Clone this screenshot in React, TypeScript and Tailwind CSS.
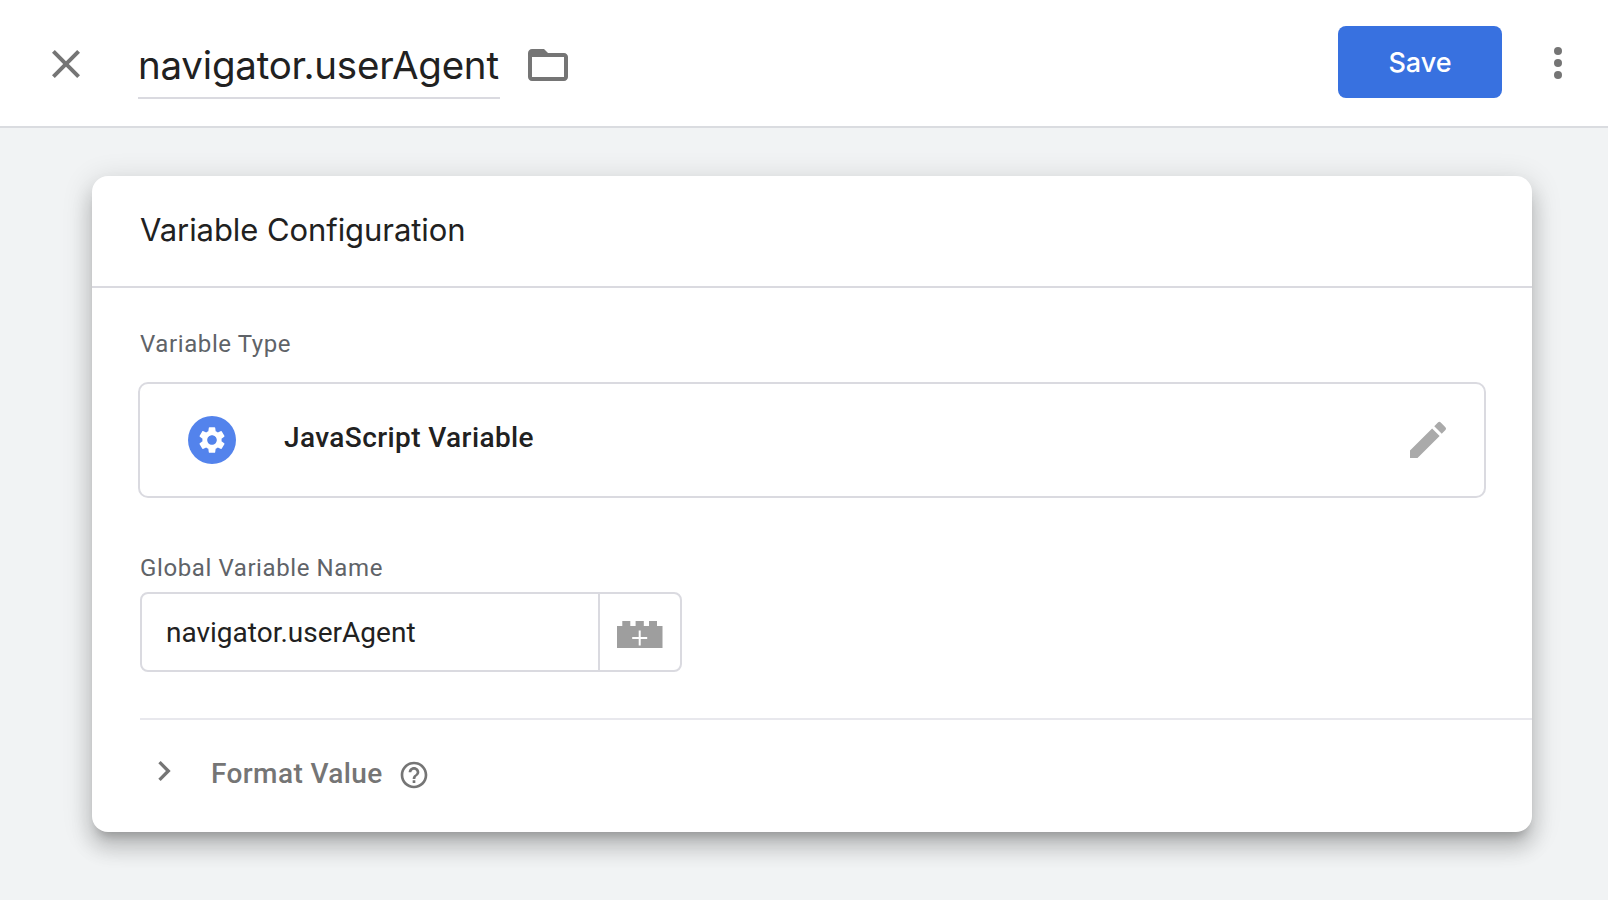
import { MdSettings, MdEdit, MdHelpOutline, MdChevronRight, MdClose, MdFolderOpen } from "react-icons/md";

function BrickIcon() {
  return (
    <svg className="h-[27px] w-[46px]" viewBox="0 0 46 27" fill="none">
      <path d="M0 5H5.3V0H13.3V5H18.6V0H26.8V5H32V0H40V5H45.5V27H0Z" fill="#9e9e9e" />
      <path d="M22.7 9.5V24.5M15.2 17H30.2" stroke="#fff" strokeWidth="2" />
    </svg>
  );
}

function Header() {
  return (
    <header className="flex h-32 items-start border-b-2 border-[#dadce0] bg-white">
      <button className="mt-[40px] ml-[42px] text-[#757575]">
        <MdClose className="size-12" />
      </button>
      <div className="mt-[34px] ml-[48px] h-[65px] w-[362px] border-b-2 border-[#dadae0] font-[Inter,sans-serif] text-[38.5px] leading-[63px] tracking-[-0.22px] whitespace-nowrap text-[#212121]">
        navigator.userAgent
      </div>
      <button className="mt-[41px] ml-[24px] text-[#757575]">
        <MdFolderOpen className="size-12" />
      </button>
      <button className="mt-[26px] ml-auto h-[72px] w-[164px] rounded-lg bg-[#3871e0] pt-[3px] font-[Inter,sans-serif] text-[27px] font-medium text-white">
        Save
      </button>
      <button className="mt-[47px] mr-[46px] ml-[52px] flex flex-col gap-1">
        <span className="size-2 rounded-full bg-[#757575]" />
        <span className="size-2 rounded-full bg-[#757575]" />
        <span className="size-2 rounded-full bg-[#757575]" />
      </button>
    </header>
  );
}

export default function App() {
  return (
    <div className="flex h-[900px] w-[1608px] flex-col overflow-hidden bg-[#f1f3f4] font-[Roboto,sans-serif]">
      <Header />
      <main className="mt-12 mr-[76px] ml-[92px] h-[656px] rounded-2xl bg-white shadow-[0_10px_10px_-6px_rgba(0,0,0,0.2),0_16px_20px_2px_rgba(0,0,0,0.14),0_6px_28px_4px_rgba(0,0,0,0.12)]">
        <h2 className="h-28 border-b-2 border-[#dadae0] pl-12 font-[Inter,sans-serif] text-[31px] leading-[108px] tracking-[-0.07px] text-[#212121]">
          Variable Configuration
        </h2>
        <section className="pr-[46px] pl-[46px]">
          <div className="mt-[40px] pl-[2px] text-[24px] leading-8 tracking-[0.6px] text-[#5f6368]">Variable Type</div>
          <div className="mt-[22px] flex h-[116px] items-center rounded-[10px] border-2 border-[#dadae0] pr-[32px] pl-[48px]">
            <div className="flex size-12 items-center justify-center rounded-full bg-[#5383ec] text-white">
              <MdSettings className="size-8" />
            </div>
            <div className="mb-[5px] ml-12 text-[28px] font-medium tracking-[0.4px] text-[#212121]">JavaScript Variable</div>
            <MdEdit className="ml-auto size-12 text-[#aaaaaa]" />
          </div>
          <div className="mt-[54px] pl-[2px] text-[24px] leading-8 tracking-[0.6px] text-[#5f6368]">Global Variable Name</div>
          <div className="mt-[8px] ml-[2px] flex h-20 w-[542px] rounded-lg border-2 border-[#dadae0]">
            <div className="w-[458px] border-r-2 border-[#dadae0] pl-6 text-[28px] leading-[78px] text-[#212121]">navigator.userAgent</div>
            <div className="flex flex-1 items-center justify-center pt-[5px]">
              <BrickIcon />
            </div>
          </div>
        </section>
        <section className="mt-[46px] ml-12 flex h-[112px] items-center border-t-2 border-[#e8e8ed] text-[#757575]">
          <MdChevronRight className="mb-[9px] ml-[4px] size-10" />
          <span className="mb-[2px] ml-[27px] text-[28px] font-medium tracking-[0.4px]">Format Value</span>
          <MdHelpOutline className="ml-[15px] size-8" />
        </section>
      </main>
    </div>
  );
}
